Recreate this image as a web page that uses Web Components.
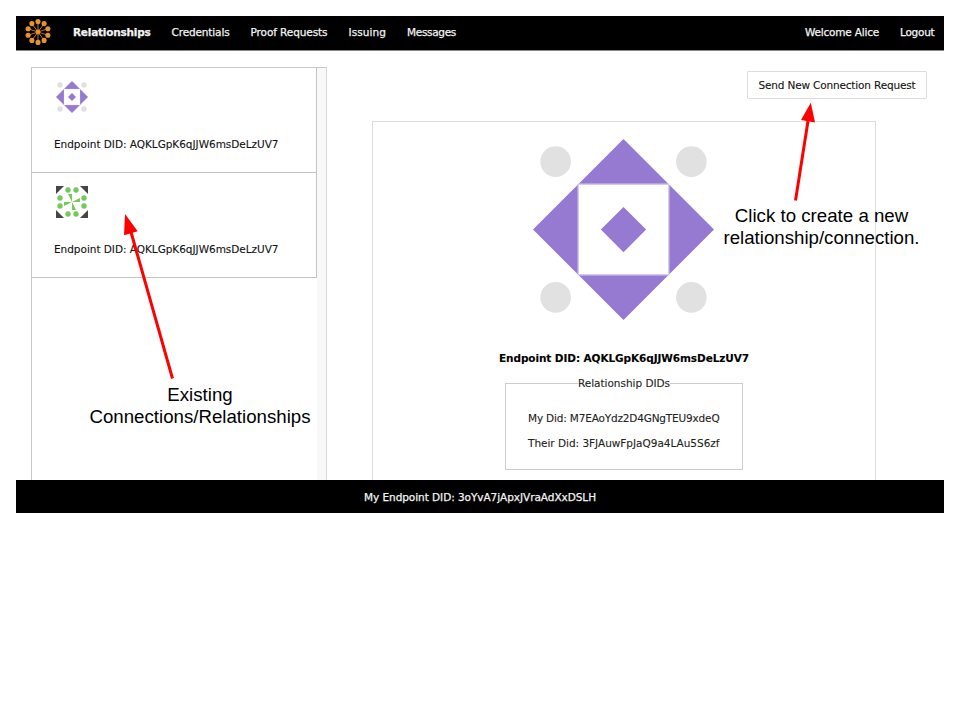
<!DOCTYPE html>
<html lang="en">
<head>
<meta charset="utf-8">
<title>Relationships</title>
<style>
html,body{margin:0;height:100%;background:#fff;overflow:hidden}
</style>
</head>
<body>
<relationship-page></relationship-page>
<script>
const define = (name, html, ready) => {
  const t = document.createElement('template');
  t.innerHTML = html;
  customElements.define(name, class extends HTMLElement {
    connectedCallback() {
      if (this.shadowRoot) return;
      this.attachShadow({ mode: 'open' }).append(t.content.cloneNode(true));
      if (ready) ready(this, this.shadowRoot);
    }
  });
};

/* One line of text, tracked so that it fills the given width. */
define('text-line', `<style>
  :host{display:block;white-space:pre;flex:none}
  span{display:inline-block}
</style><span><slot></slot></span>`, (el, root) => {
  const w = +el.getAttribute('width');
  const s = root.querySelector('span');
  const n = el.textContent.length;
  el.style.width = w + 'px';
  const natural = s.getBoundingClientRect().width;
  s.style.letterSpacing = ((w - natural) / n).toFixed(4) + 'px';
});

const petals = [...Array(10)].map((_, i) => {
  const a = i * Math.PI / 5;
  return [(14 + 10.4 * Math.sin(a)).toFixed(2), (14 - 10.4 * Math.cos(a)).toFixed(2)];
});
define('brand-logo', `<style>:host{display:block;width:28px;height:28px}svg{display:block}</style>
<svg width="28" height="28" viewBox="0 0 28 28" fill="#e8922a">
<path stroke="#c97d22" stroke-width=".9" d="${petals.map(p => 'M14 14L' + p.join(' ')).join('')}"/>
<circle cx="14" cy="14" r="2.4"/>${petals.map(p => `<circle cx="${p[0]}" cy="${p[1]}" r="2.55"/>`).join('')}</svg>`);

const art = {
  diamond: `<g fill="#967ad2"><path d="M16 0L24 8H8zM32 16L24 24V8zM16 32L8 24H24zM0 16L8 8V24z"/><path d="M16 12L20 16L16 20L12 16z"/></g>
   <path d="M8 8H24V24H8z" fill="none" stroke="#d5caed" stroke-width=".25"/>
   <g fill="#e1e1e1"><circle cx="4" cy="4" r="2.7"/><circle cx="28" cy="4" r="2.7"/><circle cx="4" cy="28" r="2.7"/><circle cx="28" cy="28" r="2.7"/></g>`,
  pinwheel: `<path fill="#464646" d="M0 0H8L0 8zM32 0V8L24 0zM32 32H24L32 24zM0 32V24L8 32z"/>
   <g fill="#74c95b"><path d="M12 8H16V16zM24 12V16H16zM20 24H16V16zM8 20V16H16z"/>
   <circle cx="12" cy="4" r="2.7"/><circle cx="20" cy="4" r="2.7"/><circle cx="28" cy="12" r="2.7"/><circle cx="28" cy="20" r="2.7"/><circle cx="20" cy="28" r="2.7"/><circle cx="12" cy="28" r="2.7"/><circle cx="4" cy="20" r="2.7"/><circle cx="4" cy="12" r="2.7"/></g>`
};
define('identity-icon', `<style>:host{display:block;flex:none}svg{display:block;width:100%;height:100%}</style><svg viewBox="0 0 32 32"></svg>`,
  (el, root) => { root.querySelector('svg').innerHTML = art[el.getAttribute('kind')]; });

define('nav-bar', `<style>
  :host{display:flex;box-sizing:border-box;height:35px;background:#000;border-bottom:1px solid #888;color:#f4f4f4;align-items:center;padding:0 10px 2px 8px;-webkit-text-stroke:.25px #f4f4f4}
  nav{display:flex;gap:21px;margin-left:21px}
  .user{margin-left:auto;margin-right:-.5px}
  .on{font-weight:700}
</style>
<brand-logo></brand-logo>
<nav><text-line class="on" width="77.5">Relationships</text-line><text-line width="58">Credentials</text-line><text-line width="77">Proof Requests</text-line><text-line width="37.5">Issuing</text-line><text-line width="49">Messages</text-line></nav>
<nav class="user"><text-line width="74">Welcome Alice</text-line><text-line width="34.5">Logout</text-line></nav>`);

define('connection-card', `<style>
  :host{display:flex;flex-direction:column;box-sizing:border-box;height:105px;padding:13px 24px 0 21.5px;border:solid #c4c4c4;border-width:0 1px 1px 0;color:#111}
  .icon{width:32px;height:32px;margin-left:2.5px}
  identity-icon{width:32px;height:32px}
  text-line{margin-top:25px;margin-left:.5px}
</style><div class="icon"></div><text-line width="224.5">Endpoint DID: AQKLGpK6qJJW6msDeLzUV7</text-line>`,
  (el, root) => {
    root.querySelector('.icon').innerHTML = `<identity-icon kind="${el.getAttribute('kind')}"></identity-icon>`;
  });

define('connection-list', `<style>
  :host{display:grid;grid-template-columns:285px 9px;box-sizing:border-box;width:296px;border:1px solid #c8c8c8;border-right-color:#d8d8d8;border-bottom:0}
  .track{background:#f8f8f8}
</style><div><slot></slot></div><div class="track"></div>`);

define('did-group', `<style>
  :host{display:block}
  fieldset{box-sizing:border-box;width:238px;height:87px;margin:0;padding:22px 22px 0;border:1px solid #ccc;color:#222}
  legend{margin:0 auto;padding:0;color:#222}
  text-line+text-line{margin-top:12px}
</style><fieldset><legend><text-line width="92">Relationship DIDs</text-line></legend>
<text-line width="191.5">My Did: M7EAoYdz2D4GNgTEU9xdeQ</text-line><text-line width="191.5">Their Did: 3FJAuwFpJaQ9a4LAu5S6zf</text-line></fieldset>`.replace('height:87px', 'height:93px'));

define('connection-detail', `<style>
  :host{display:flex;flex-direction:column;align-items:center;box-sizing:border-box;width:504px;border:1px solid #ddd;border-bottom:0;padding-top:17px}
  identity-icon{width:181px;height:181px;margin-right:1px}
  .title{font-weight:700;color:#000;margin-top:32px}
  did-group{margin-top:12px}
</style><identity-icon kind="diamond"></identity-icon>
<text-line class="title" width="250">Endpoint DID: AQKLGpK6qJJW6msDeLzUV7</text-line>
<did-group></did-group>`);

define('request-button', `<style>
  :host{display:block}
  button{font:inherit;display:flex;align-items:center;justify-content:center;box-sizing:border-box;width:180px;height:28px;margin:0;padding:0;background:#fff;border:1px solid #ddd;border-radius:1px;color:#111}
</style><button><text-line width="157">Send New Connection Request</text-line></button>`);

define('status-bar', `<style>
  :host{display:flex;align-items:center;justify-content:center;box-sizing:border-box;height:33px;background:#000;color:#f4f4f4;padding-top:2px;-webkit-text-stroke:.25px #f4f4f4}
</style><text-line width="232">My Endpoint DID: 3oYvA7jApxJVraAdXxDSLH</text-line>`);

define('note-overlay', `<style>
  :host{position:absolute;inset:0;font:18.67px/22px "Liberation Sans",Arial,sans-serif;color:#000}
  svg{position:absolute;inset:0}
  .note{position:absolute;display:flex;flex-direction:column;align-items:center}
  .a{left:89.5px;top:384px}
  .b{left:723.5px;top:205px}
</style>
<svg width="960" height="720" fill="#f00" stroke="#f00"><path d="M172.5 378.5L131 232M795.5 200.5L808 121" stroke-width="3"/><path stroke="none" d="M125 214L137.7 231.3L124 235.3zM810.8 102.8L815 122.5L801 120z"/></svg>
<div class="note a"><text-line width="65.5">Existing</text-line><text-line width="221">Connections/Relationships</text-line></div>
<div class="note b"><text-line width="173.5">Click to create a new</text-line><text-line width="196">relationship/connection.</text-line></div>`);

define('relationship-page', `<style>
  :host{display:block;box-sizing:border-box;position:relative;width:960px;height:720px;padding:16px;font:10.5px/13px "DejaVu Sans",Verdana,sans-serif;-webkit-text-stroke:.1px}
  note-overlay{-webkit-text-stroke:0}
  main{display:flex;height:429px;box-sizing:border-box;padding:16px 17px 0 15px;overflow:hidden}
  section{display:flex;flex-direction:column;flex:1;padding:4px 0 0 45px}
  request-button{align-self:flex-end}
  connection-detail{flex:1;margin-top:22px}
</style>
<nav-bar></nav-bar>
<main>
  <connection-list><connection-card kind="diamond"></connection-card><connection-card kind="pinwheel"></connection-card></connection-list>
  <section><request-button></request-button><connection-detail></connection-detail></section>
</main>
<status-bar></status-bar>
<note-overlay></note-overlay>`);
</script>
</body>
</html>
